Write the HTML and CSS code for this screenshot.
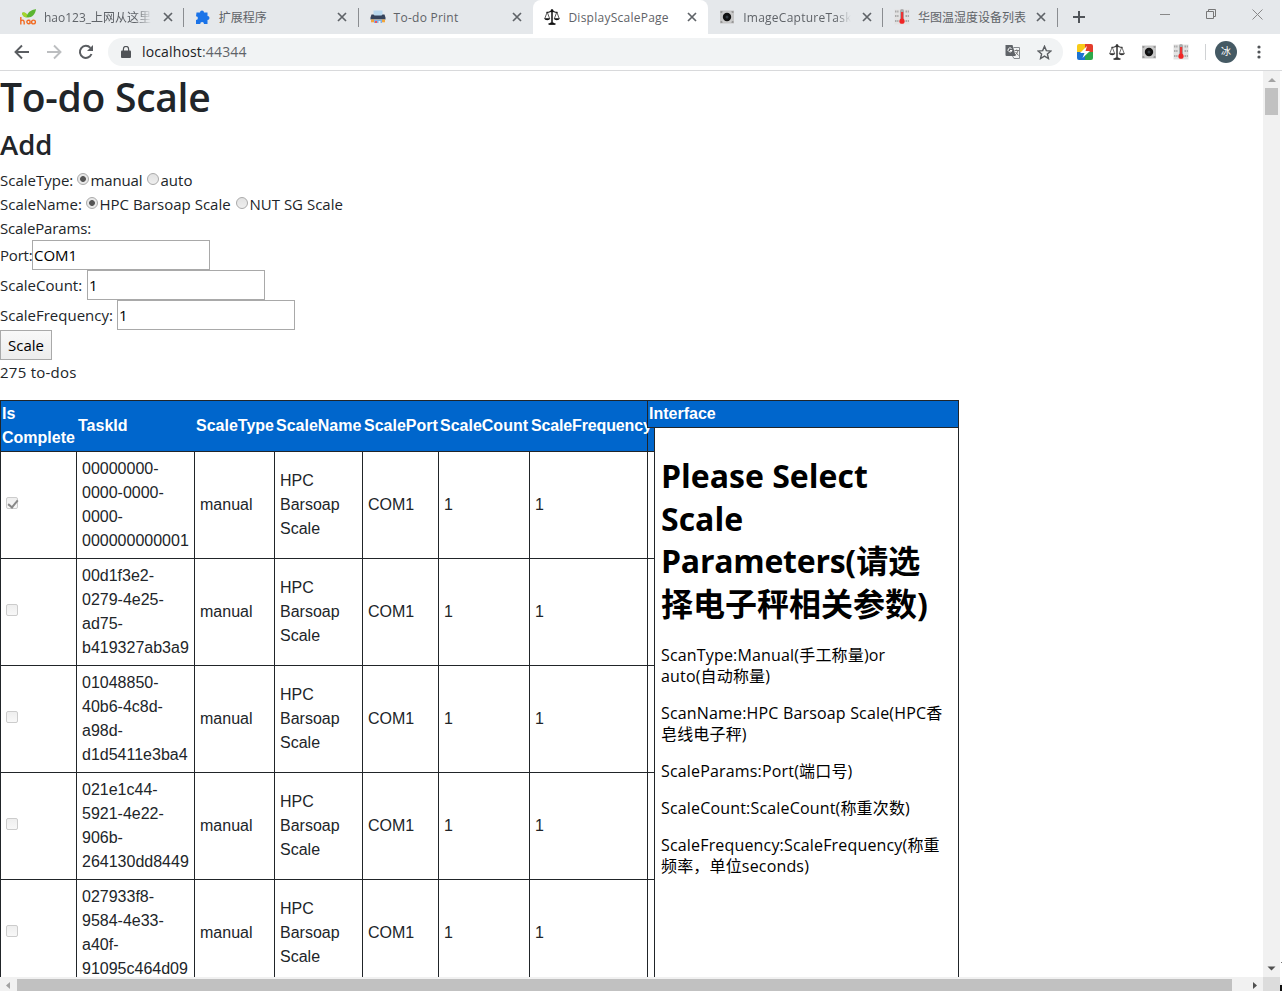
FILE: index.html
```
<!DOCTYPE html>
<html lang="zh-CN">
<head>
<meta charset="utf-8">
<title>DisplayScalePage</title>
<link rel="stylesheet" href="styles.css">
</head>
<body>
<svg class="defs" width="0" height="0">
  <symbol id="x" viewBox="0 0 10 10"><path d="M1 1l8 8M9 1l-8 8" stroke="#5f6368" stroke-width="1.7" fill="none"/></symbol>
  <symbol id="scale" viewBox="0 0 16 16"><path d="M8 .5v14M4.500 15h7" stroke="currentColor" stroke-width="1.500" fill="none"/><path d="M2.500 3.200C5 3.800 6 2.200 8 2.200s3 1.600 5.500 1" stroke="currentColor" stroke-width="1.100" fill="none"/><path d="M3.200 3L.8 9.500M3.200 3l2.400 6.500M12.800 3l-2.400 6.500M12.800 3l2.400 6.500" stroke="currentColor" stroke-width=".7" fill="none"/><path d="M.2 9.300h6c-.3 2.600-5.700 2.600-6 0zM9.800 9.300h6c-.3 2.600-5.700 2.600-6 0zM6.500 13.500h3l1.500 2H5z" fill="currentColor"/><circle cx="8" cy="1.800" r="1.500" fill="currentColor"/></symbol>
  <symbol id="cam" viewBox="0 0 16 16"><path d="M1 1.500h14v13H1z" fill="#c6c6c6"/><path d="M1.500 2h2v2h-2zM12.500 2h2v2h-2zM1.500 12h2v2h-2zM12.500 12h2v2h-2z" fill="#999"/><path d="M3.500 3h9v10h-9z" fill="#ccc"/><circle cx="8" cy="8" r="4.200" fill="#111"/><circle cx="8" cy="8" r="1.500" fill="#343c42"/></symbol>
  <symbol id="thermo" viewBox="0 0 16 16"><path d="M.5.500h15v15H.5z" fill="#e2e2e2"/><path d="M1 2.500h3.500M1 7h3.500M1 12h3.500M11.500 2.500H15M11.500 7H15M11.500 12H15" stroke="#aaa" stroke-width="2" stroke-dasharray="1.500 .7"/><path d="M6 2a2 2 0 0 1 4 0v9H6z" fill="#aaa"/><path d="M7 3h2.200v8H7z" fill="#e33"/><circle cx="8" cy="12.200" r="2.600" fill="#f02525"/></symbol>
</svg>

<header class="tabs">
  <div class="tab">
    <svg class="fav" viewBox="0 0 16 16"><path d="M2 4c2.500-1 4.500 0 5 2C9 2 12 1 16 0c-.5 5-4 8.500-8 8.500C4.500 8.500 2.500 7 2 4z" fill="#5cb531"/><path d="M2 4c2.500-1 4.500 0 5 2l-.5 2.500C4 8 2.500 7 2 4z" fill="#a6d52b"/><path d="M.8 8v7.500M.8 12c2.500-2 3.700-.5 3.400 3.500M10 11.500c-4-1.500-4 3.500-1 3.300 1.500-.2 1-3.300 1-3.300v3.500" stroke="#f26a21" stroke-width="1.400" fill="none"/><circle cx="13.500" cy="13" r="1.900" stroke="#f26a21" stroke-width="1.400" fill="none"/></svg>
    <span class="name fade">hao123_上网从这里</span><svg class="close"><use href="#x"/></svg>
  </div>
  <div class="tab">
    <svg class="fav" viewBox="0 0 16 16"><path d="M1.500 3.500H5a2 2 0 1 1 4 0h3.500V7a2 2 0 1 1 0 4v4H9a1.900 1.900 0 0 0-3.800 0H1v-4a1.900 1.900 0 0 0 0-3.800z" fill="#1a73e8"/></svg>
    <span class="name">扩展程序</span><svg class="close"><use href="#x"/></svg>
  </div>
  <div class="tab last">
    <svg class="fav" viewBox="0 0 16 16"><path d="M3.500 1.500h9V8h-9z" fill="#b9d8ee"/><path d="M1.500 5.500h2l1 1h7l1-1h2l1 3v2H.5v-2z" fill="#34435c"/><path d="M1 10.500h14v2.800H1z" fill="#f2a63c"/><path d="M4 10.500h8V14H4z" fill="#7fb0e8"/><path d="M5 12h2v2H5z" fill="#e95568"/><path d="M8.500 12h2v2h-2z" fill="#eee"/></svg>
    <span class="name wide">To-do Print</span><svg class="close"><use href="#x"/></svg>
  </div>
  <div class="tab active">
    <svg class="fav"><use href="#scale"/></svg>
    <span class="name wide">DisplayScalePage</span><svg class="close"><use href="#x"/></svg>
  </div>
  <div class="tab">
    <svg class="fav"><use href="#cam"/></svg>
    <span class="name wide fade">ImageCaptureTaskl</span><svg class="close"><use href="#x"/></svg>
  </div>
  <div class="tab">
    <svg class="fav"><use href="#thermo"/></svg>
    <span class="name">华图温湿度设备列表</span><svg class="close"><use href="#x"/></svg>
  </div>
  <svg class="plus" viewBox="0 0 12 12"><path d="M6 0v12M0 6h12" stroke="#505459" stroke-width="2"/></svg>
  <div class="window-buttons">
    <svg width="11" height="11"><path d="M0 5.500h10" stroke="#888"/></svg>
    <svg width="11" height="11"><path d="M.5 2.500h7v7h-7zM2.500 2.500v-2h7v7h-2" stroke="#777" fill="none"/></svg>
    <svg width="11" height="11"><path d="M.5.500l10 10M10.500.500l-10 10" stroke="#888"/></svg>
  </div>
</header>

<nav class="toolbar">
  <svg class="nav-icon" viewBox="0 0 16 16"><path d="M15 8H2M8 1.500L1.500 8 8 14.500" stroke="#5a5d61" stroke-width="1.900" fill="none"/></svg>
  <svg class="nav-icon" viewBox="0 0 16 16"><path d="M1 8h13M8 1.500L14.500 8 8 14.500" stroke="#bcbec0" stroke-width="1.900" fill="none"/></svg>
  <svg class="nav-icon" viewBox="0 0 16 16"><path d="M13.500 10A6 6 0 1 1 12.400 3.900" stroke="#5a5d61" stroke-width="2" fill="none"/><path d="M15 1v6H9z" fill="#5a5d61"/></svg>
  <div class="address">
    <svg class="lock" viewBox="0 0 10 12"><path d="M1 4.500h8q1 0 1 1V11q0 1-1 1H1q-1 0-1-1V5.500q0-1 1-1z" fill="#505357"/><path d="M2.400 5V3a2.600 2.600 0 0 1 5.200 0v2" stroke="#505357" stroke-width="1.200" fill="none"/></svg>
    <span class="url">localhost<span class="port">:44344</span></span>
    <svg class="translate" viewBox="0 0 16 14"><path d="M.5 0h7l3.200 11H1.500q-1 0-1-1z" fill="#5f6368"/><path d="M8.500 2.500h6v11H9l-1.500-2.500" stroke="#85898d" fill="none"/><path d="M9.500 5.500h4.500M11.700 4.500v1M13 5.500c-.5 2-1.500 3.500-3 4.500M10.500 7l3 3.500" stroke="#777" fill="none"/><path d="M6.500 3.500a2 2 0 1 0 .5 2H5" stroke="#fff" fill="none"/></svg>
    <svg class="star" viewBox="0 0 14 14"><path d="M7 1.200l1.700 4 4.300.4-3.300 2.800 1 4.200L7 10.400l-3.700 2.200 1-4.200L1 5.600l4.300-.4z" stroke="#5a5d61" stroke-width="1.300" fill="none"/></svg>
  </div>
  <div class="extensions">
    <svg viewBox="0 0 16 16"><path d="M0 2q0-2 2-2h6v8H0z" fill="#f8cb18"/><path d="M8 0h6q2 0 2 2v6H8z" fill="#e33d2c"/><path d="M0 8h8v8H2q-2 0-2-2z" fill="#1d73d2"/><path d="M8 8h8v6q0 2-2 2H8z" fill="#2da84a"/><path d="M10 2L3 9h4.500L5.500 14 13 7H8.500z" fill="#fff"/></svg>
    <svg class="dark"><use href="#scale"/></svg>
    <svg><use href="#cam"/></svg>
    <svg><use href="#thermo"/></svg>
  </div>
  <span class="avatar">冰</span>
  <svg class="dots" viewBox="0 0 4 14"><g fill="#505357"><circle cx="2" cy="2" r="1.600"/><circle cx="2" cy="7" r="1.600"/><circle cx="2" cy="12" r="1.600"/></g></svg>
</nav>

<div class="viewport">
  <main class="page">
    <h1>To-do Scale</h1>
    <h2>Add</h2>
    <form>
      <div class="line"><span class="l-type">ScaleType:</span><input type="radio" name="t" checked><label class="manual">manual</label><input type="radio" name="t"><label>auto</label></div>
      <div class="line"><span class="l-name">ScaleName:</span><input type="radio" name="n" checked><label class="hpc">HPC Barsoap Scale</label><input type="radio" name="n"><label class="nut">NUT SG Scale</label></div>
      <div class="line params">ScaleParams:</div>
      <div class="field"><span class="l-port">Port:</span><input type="text" value="COM1"></div>
      <div class="field"><span class="l-count">ScaleCount:</span><input type="text" value="1"></div>
      <div class="field"><span class="l-freq">ScaleFrequency:</span><input type="text" value="1"></div>
      <button type="button">Scale</button>
    </form>
    <p class="counter">275 to-dos</p>

    <div class="lists">
      <table class="tasks">
        <colgroup><col class="c1"><col class="c2"><col class="c3"><col class="c4"><col class="c5"><col class="c6"><col class="c7"><col class="c8"></colgroup>
        <tr><th>Is<br>Complete</th><th>TaskId</th><th>ScaleType</th><th>ScaleName</th><th>ScalePort</th><th>ScaleCount</th><th>ScaleFrequency</th><th></th></tr>
        <tr><td><span class="check on"></span></td><td>00000000-<br>0000-0000-<br>0000-<br>000000000001</td><td>manual</td><td>HPC<br>Barsoap<br>Scale</td><td>COM1</td><td>1</td><td>1</td><td></td></tr>
        <tr><td><span class="check"></span></td><td>00d1f3e2-<br>0279-4e25-<br>ad75-<br>b419327ab3a9</td><td>manual</td><td>HPC<br>Barsoap<br>Scale</td><td>COM1</td><td>1</td><td>1</td><td></td></tr>
        <tr><td><span class="check"></span></td><td>01048850-<br>40b6-4c8d-<br>a98d-<br>d1d5411e3ba4</td><td>manual</td><td>HPC<br>Barsoap<br>Scale</td><td>COM1</td><td>1</td><td>1</td><td></td></tr>
        <tr><td><span class="check"></span></td><td>021e1c44-<br>5921-4e22-<br>906b-<br>264130dd8449</td><td>manual</td><td>HPC<br>Barsoap<br>Scale</td><td>COM1</td><td>1</td><td>1</td><td></td></tr>
        <tr><td><span class="check"></span></td><td>027933f8-<br>9584-4e33-<br>a40f-<br>91095c464d09</td><td>manual</td><td>HPC<br>Barsoap<br>Scale</td><td>COM1</td><td>1</td><td>1</td><td></td></tr>
      </table>
      <section class="interface">
        <div class="interface-head">Interface</div>
        <div class="interface-body">
          <h3>Please Select<br>Scale<br><span class="tight">Parameters</span>(请选<br>择电子秤相关参数)</h3>
          <p>ScanType:Manual(手工称量)or<br>auto(自动称量)</p>
          <p>ScanName:HPC Barsoap Scale(HPC香<br>皂线电子秤)</p>
          <p>ScaleParams:Port(端口号)</p>
          <p>ScaleCount:ScaleCount(称重次数)</p>
          <p>ScaleFrequency:ScaleFrequency(称重<br>频率，单位seconds)</p>
        </div>
      </section>
    </div>
  </main>
  <div class="vbar"><svg width="17" height="17"><path d="M5 11l4-4 4 4z" fill="#a3a3a3"/></svg><div class="vthumb"></div><svg class="down" width="17" height="17"><path d="M4.500 6.500h8l-4 4z" fill="#505050"/></svg></div>
  <div class="edge"></div>
</div>
<div class="hbar"><svg width="17" height="14"><path d="M10 5v7L6 8.500z" fill="#a3a3a3"/></svg><div class="hthumb"></div><svg class="right" width="17" height="14"><path d="M7 5v7l4-3.500z" fill="#505050"/></svg><div class="corner"></div><div class="edge-dark"></div></div>
</body>
</html>
```

FILE: styles.css
```
* { box-sizing: border-box; }
body {
  margin: 0;
  width: 1282px;
  height: 991px;
  overflow: hidden;
  background: #fff;
  color: #212529;
  font: 15px/24px "Open Sans", "Noto Sans CJK SC", sans-serif;
}
svg { display: block; flex: none; }
.defs { position: absolute; }

/* tab strip */
.tabs { display: flex; width: 1280px; height: 34px; background: #e5e8eb; padding-left: 9px; }
.tab {
  display: flex;
  align-items: center;
  width: 174.800px;
  height: 34px;
  padding: 0 10px 0 11px;
  position: relative;
}
.tab::after { content: ""; position: absolute; right: 0; top: 8px; width: 1px; height: 19px; background: #8a8d91; }
.tab.last::after { display: none; }
.tab.active { background: #fff; border-radius: 8px 8px 0 0; }
.tab.active::after { display: none; }
.fav { width: 16px; height: 16px; margin-right: 8px; color: #111; }
.name {
  width: 108px;
  margin-right: 10.500px;
  padding-top: 2px;
  white-space: nowrap;
  font-size: 12px;
  line-height: 20px;
  color: #5f6368;
}
.wide { letter-spacing: .25px; }
.fade { -webkit-mask-image: linear-gradient(90deg, #000 86%, transparent); mask-image: linear-gradient(90deg, #000 86%, transparent); }
.close { width: 10px; height: 10px; }
.plus { width: 12px; height: 12px; margin: 11px 0 0 15px; }
.window-buttons { display: flex; gap: 35px; margin: 9px 0 0 75px; }

/* toolbar */
.toolbar { display: flex; align-items: center; height: 37px; border-bottom: 1px solid #d8d9db; padding-left: 14px; }
.nav-icon { width: 16px; height: 16px; margin-right: 16px; }
.address { display: flex; align-items: center; width: 955px; height: 28px; margin-left: -2px; padding-left: 13px; border-radius: 14px; background: #f1f3f4; }
.lock { width: 10px; height: 12px; margin-right: 11px; }
.url { font-size: 14px; letter-spacing: .15px; color: #202124; width: 863px; }
.port { color: #5f6368; }
.translate { width: 16px; height: 14px; margin-right: 16px; }
.star { width: 15px; height: 15px; }
.extensions { display: flex; gap: 16px; margin-left: 14px; padding-right: 16px; border-right: 1px solid #d0d2d4; }
.extensions svg { width: 16px; height: 16px; }
.dark { color: #333; }
.avatar { width: 22px; height: 22px; margin-left: 9px; border-radius: 50%; background: #455a64; color: #fff; font-size: 10px; line-height: 21px; text-align: center; }
.dots { width: 4px; height: 14px; margin-left: 20px; }

/* page area */
.viewport { display: flex; height: 906px; }
.page { width: 1263px; height: 906px; overflow: hidden; }
h1, h2, h3, p { margin: 0; }
h1 { height: 56px; font-size: 39px; line-height: 51px; font-weight: 600; letter-spacing: -.27px; }
h2 { height: 41px; font-size: 27.500px; line-height: 35px; font-weight: 600; }
.line { display: flex; align-items: center; height: 24px; white-space: nowrap; }
.params { letter-spacing: -.15px; }
.field { display: flex; align-items: center; height: 30px; }
input { margin: 0; flex: none; }
input[type="radio"] {
  appearance: none;
  width: 12px;
  height: 12px;
  margin: 0 1.500px 2px 0;
  border: 1px solid #aaa;
  border-radius: 50%;
  background: linear-gradient(#e2e2e2, #eee);
}
input[type="radio"]:checked { background: radial-gradient(circle, #555 0 2.500px, #e8e8e8 3.300px); }
.l-type { width: 77px; }
.l-name { width: 86px; }
.manual { width: 56.500px; letter-spacing: -.15px; }
.hpc { width: 136.500px; }
.l-port { width: 32px; letter-spacing: -.2px; }
.l-count { width: 87px; }
.l-freq { width: 117px; }
input[type="text"] { width: 178px; height: 30px; padding: 1px; border: 1px solid #a9a9a9; font: inherit; color: #000; background: #fff; }
button { display: block; width: 52px; height: 30px; padding: 0; border: 1px solid #a9a9a9; background: linear-gradient(#f8f8f8, #ededed); font: inherit; color: #000; }
.counter { height: 40px; line-height: 25px; letter-spacing: .25px; }

/* task list */
.lists { display: flex; align-items: flex-start; }
.tasks { flex: none; width: 655px; table-layout: fixed; border-collapse: collapse; font: 16px/24px "Liberation Sans", Arial, sans-serif; }
.c1 { width: 76px; }
.c2 { width: 118px; }
.c3 { width: 80px; }
.c4 { width: 88px; }
.c5 { width: 76px; }
.c6 { width: 91px; }
.c7 { width: 118px; }
.c8 { width: 8px; }
.tasks tr { height: 107px; }
.tasks tr:first-child { height: 51px; }
th { padding: 0 1px; background: #06c; color: #fff; text-align: left; white-space: nowrap; border: solid #212529; border-width: 1px 0; }
th:first-child { border-left-width: 1px; }
th:nth-child(n+2) { padding-left: 1.500px; }
th:nth-child(7) { letter-spacing: -.15px; }
th:last-child { border-left-width: 1px; }
td { padding: 0 5px; border: 1px solid #212529; white-space: nowrap; }
td:last-child { padding: 0; }
.check { display: block; width: 12px; height: 12px; margin-top: -5px; border: 1px solid #ccc; border-radius: 2px; background: linear-gradient(#eee, #f8f8f8); }
.on::before { content: ""; display: block; width: 4px; height: 8px; margin: 0 0 0 3px; border: solid #888; border-width: 0 2px 2px 0; transform: rotate(40deg); }

.interface { position: relative; width: 312px; margin-left: -8px; }
.interface { margin-left: -9px; }
.interface-head { width: 313px; height: 28px; padding: 0 0 0 1px; border: 1px solid #212529; background: #06c; color: #fff; font: bold 16px/25px "Liberation Sans", Arial, sans-serif; }
.interface-body { width: 306px; height: 560px; margin-left: 7px; padding: 27px 0 0 6px; border: solid #212529; border-width: 0 1px; background: #fff; color: #000; white-space: nowrap; }
.interface-head { width: 312px; }
.interface-body { width: 305px; }
.interface h3 { margin-bottom: 20px; font-size: 32px; line-height: 42.500px; font-weight: 700; }
.tight { letter-spacing: -.25px; }
.interface p { margin-bottom: 16px; font-size: 16px; line-height: 21px; letter-spacing: .17px; }

/* scrollbars */
.vbar { display: flex; flex-direction: column; width: 17px; background: #f1f1f1; }
.vthumb { width: 13px; height: 27px; margin-left: 2px; background: #c1c1c1; }
.down { margin-top: auto; }
.edge { width: 1px; height: 1px; margin: 891px 0 0 1px; background: #777; }
.hbar { display: flex; width: 1282px; height: 14px; background: #f1f1f1; }
.hthumb { width: 1215px; height: 12px; margin-top: 2px; background: #c1c1c1; }
.right { margin-left: auto; }
.corner { width: 17px; background: #dcdcdc; }
.edge-dark { width: 2px; height: 6px; margin-top: 8px; background: #111; box-shadow: 0 -8px 0 #fff; }
```
